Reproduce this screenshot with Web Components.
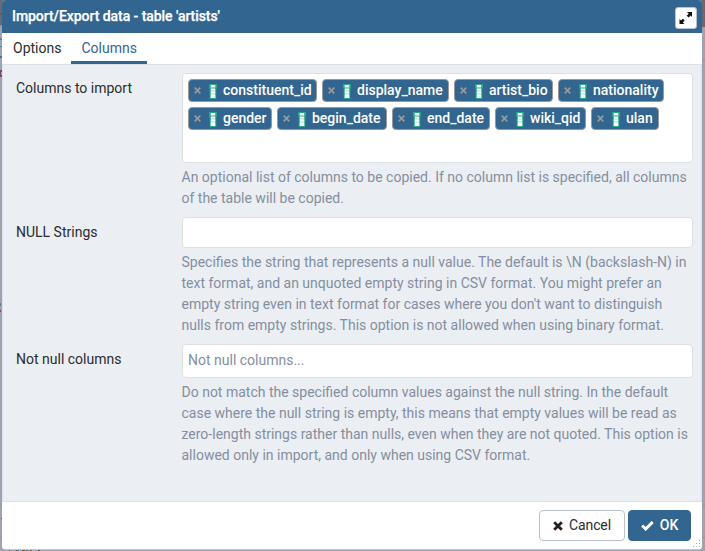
<!DOCTYPE html>
<html lang="en"><head><meta charset="utf-8"><title>Import/Export data</title>
<style>
html,body{margin:0;height:100%;overflow:hidden}
body{font:14px/21px Roboto,"Liberation Sans",sans-serif;color:#2c2c2c;background:#9da3af}
</style></head><body>
<data-dialog></data-dialog>
<script>
const define=(name,html,setup)=>customElements.define(name,class extends HTMLElement{
  constructor(){super();this.attachShadow({mode:'open'})}
  connectedCallback(){this.shadowRoot.innerHTML=html;if(setup)setup(this,this.shadowRoot)}
});
define('page-backdrop',`<style>
:host{position:absolute;inset:0;background:#9da3af;z-index:-1}
svg{display:block}</style>
<svg width="705" height="551" shape-rendering="crispEdges"><path fill="#666b73" d="M0 0h705v27H0z"/><path fill="#8e95a2" d="M0 25h3v2H0zM701 59h4v1h-4zM0 505h3v1H0zM0 537h3v1H0zM701 505h4v1h-4zM701 537h4v1h-4z"/><path fill="#52738f" d="M0 56h3v2H0z"/><path fill="#527da5" d="M0 38h1v1h1v1H0zM0 46h2v1H0zM0 303h1v3H0z"/><path fill="#744777" d="M0 70h2v2H1v3h1v2H0zM0 310h1v2H0z"/><path fill="#695750" d="M0 13h2v2H0zM1 518h1v1H1zM9 550h1v1H9zM22 550h3v1h-3zM30 550h2v1h-2zM38 550h2v1h-2z"/><path fill="#506f91" d="M16 550h3v1h-3zM26 550h2v1h-2z"/></svg>`);
define('expand-button',`<style>
:host{display:block}button{display:block;width:22px;height:22px;padding:0;border:1px solid #bac1cd;border-radius:3px;background:#fff}svg{display:block}</style>
<button aria-label="Maximize"><svg width="20" height="20" viewBox="0 0 20 20"><path fill="#111" d="M11 4h5v5l-1.4-1.4-2 2-1.9-1.9 2-2zM3.5 11l1.5 1.5 1.8-1.8 1.9 1.9-1.8 1.8L8.5 16h-5z"/></svg></button>`);
define('dialog-header',`<style>
:host{display:flex;align-items:center;justify-content:space-between;height:33px;box-sizing:border-box;padding:3px 5px 0 10px;background:#326690;color:#fff;font-weight:500}span{margin-top:-3px;letter-spacing:-.06px;-webkit-text-stroke:.25px #fff}</style>
<span><slot></slot></span><expand-button></expand-button>`);
define('tab-item',`<style>
:host{display:block;box-sizing:border-box;height:31px;padding:5px 10px 0;border-bottom:3px solid transparent}
:host([active]){color:#326690;border-color:#326690}</style><slot></slot>`);
define('tab-bar',`<style>
:host{display:flex;height:32px;box-sizing:border-box;border-bottom:1px solid #dde0e6;background:#fff;padding-left:1px}</style><slot></slot>`);
define('column-tag',`<style>
:host{display:flex;align-items:center;box-sizing:border-box;width:var(--w);height:23px;border:1px solid #999;border-radius:4px;background:#326690;color:#fff;font-weight:500;padding-left:5px}
svg{display:block;flex:none}.c{align-self:flex-start;margin:4px 0 0 8px}span{margin:-1px 0 0 6px;line-height:21px;white-space:nowrap}</style>
<svg class="x" width="7" height="7" viewBox="0 0 7 7"><path d="M.7.7l5.6 5.6M6.3.7L.7 6.3" stroke="#999" stroke-width="1.7"/></svg>
<svg class="c" width="8" height="15" viewBox="0 0 8 15"><path fill="#27a88b" d="M0 0h8v4.5H7.3V15H.7V4.5H0z"/><path fill="#fff" d="M1.8 1h4.4v2.6H1.8zM1.8 4.5h4.4v2.2H1.8z"/><path fill="#b5e5d7" d="M1.8 6.7h4.4V14H1.8z"/><path fill="#effffb" d="M1.8 7.6h4.4v2H1.8zM1.8 10.5h4.4V14H1.8z"/></svg>
<span><slot></slot></span>`,(el)=>el.style.setProperty('--w',el.getAttribute('width')+'px'));
define('field-box',`<style>
:host{display:flex;flex-wrap:wrap;align-content:flex-start;gap:5px;box-sizing:border-box;border:1px solid #dde0e6;border-radius:4px;background:#fff;padding:5px;height:31px;color:#848ea0}
:host([multi]){height:90px}:host([placeholder]){height:34px}</style><slot></slot>`);
define('form-row',`<style>
:host{display:grid;grid-template-columns:166px 511px;height:var(--h)}
label{padding-top:5px}.help{color:#848ea0;line-height:21px;margin:4px 0 0 -.5px;white-space:nowrap}</style>
<label></label><div><slot name="field"></slot><div class="help"><slot></slot></div></div>`,(el,r)=>{r.querySelector('label').textContent=el.getAttribute('label');el.style.setProperty('--h',el.getAttribute('height')+'px')});
define('dialog-button',`<style>
:host{display:block}button{display:flex;align-items:center;justify-content:center;box-sizing:border-box;width:86px;height:31px;padding:0;border:1px solid #bac1cd;border-radius:4px;background:#fff;color:#2c2c2c;font:14px/21px Roboto,"Liberation Sans",sans-serif;gap:6px;letter-spacing:-.1px}
:host([primary]) button{width:63px;background:#326690;border-color:#326690;color:#fff;font-weight:500;letter-spacing:0}
svg{display:block}.check{display:none}:host([primary]) .check{display:block}:host([primary]) .cross{display:none}</style>
<button><svg class="cross" width="10" height="10" viewBox="0 0 10 10"><path d="M1.2 1.2l7.6 7.6M8.8 1.2L1.2 8.8" stroke="#222" stroke-width="2.8"/></svg><svg class="check" width="13" height="10" viewBox="0 0 13 10"><path d="M1.2 4.5l3.5 3.5 7-7" fill="none" stroke="#fff" stroke-width="3"/></svg><slot></slot></button>`);
define('dialog-footer',`<style>
:host{display:flex;justify-content:flex-end;gap:3px;box-sizing:border-box;height:49px;padding:8px 11px 0 0;border-top:1px solid #dde0e6;background:#fff;position:relative}
svg{position:absolute;right:1px;bottom:1px}</style><slot></slot>
<svg width="9" height="9" shape-rendering="crispEdges"><path fill="#a5a9b0" d="M7 0h1v1H7zM4 3h1v1H4zM7 3h1v1H7zM1 6h1v1H1zM4 6h1v1H4zM7 6h1v1H7z"/></svg>`);
define('data-dialog',`<style>
:host{display:block;box-sizing:border-box;width:700px;height:550px;margin-left:2px;border-bottom:1px solid #c4c9d1;border-radius:4px;overflow:hidden;background:#ebeef3}
main{box-sizing:border-box;height:436px;padding:8px 8px 0 13px;background:#ebeef3;border-left:1px solid #dde0e6;border-right:1px solid #dde0e6}
</style><page-backdrop></page-backdrop>
<dialog-header>Import/Export data - table 'artists'</dialog-header>
<tab-bar><tab-item>Options</tab-item><tab-item active>Columns</tab-item></tab-bar>
<main>
<form-row label="Columns to import" height="144"><field-box slot="field" multi>
<column-tag width="129">constituent_id</column-tag><column-tag width="127">display_name</column-tag><column-tag width="99">artist_bio</column-tag><column-tag width="106">nationality</column-tag><column-tag width="84">gender</column-tag><column-tag width="110">begin_date</column-tag><column-tag width="98">end_date</column-tag><column-tag width="91">wiki_qid</column-tag><column-tag width="68">ulan</column-tag>
</field-box>An optional list of columns to be copied. If no column list is specified, all columns<br>of the table will be copied.</form-row>
<form-row label="NULL Strings" height="127"><field-box slot="field"></field-box>Specifies the string that represents a null value. The default is \\N (backslash-N) in<br>text format, and an unquoted empty string in CSV format. You might prefer an<br>empty string even in text format for cases where you don't want to distinguish<br>nulls from empty strings. This option is not allowed when using binary format.</form-row>
<form-row label="Not null columns" height="120"><field-box slot="field" placeholder>Not null columns...</field-box>Do not match the specified column values against the null string. In the default<br>case where the null string is empty, this means that empty values will be read as<br>zero-length strings rather than nulls, even when they are not quoted. This option is<br>allowed only in import, and only when using CSV format.</form-row>
</main>
<dialog-footer><dialog-button>Cancel</dialog-button><dialog-button primary>OK</dialog-button></dialog-footer>`);
</script></body></html>
